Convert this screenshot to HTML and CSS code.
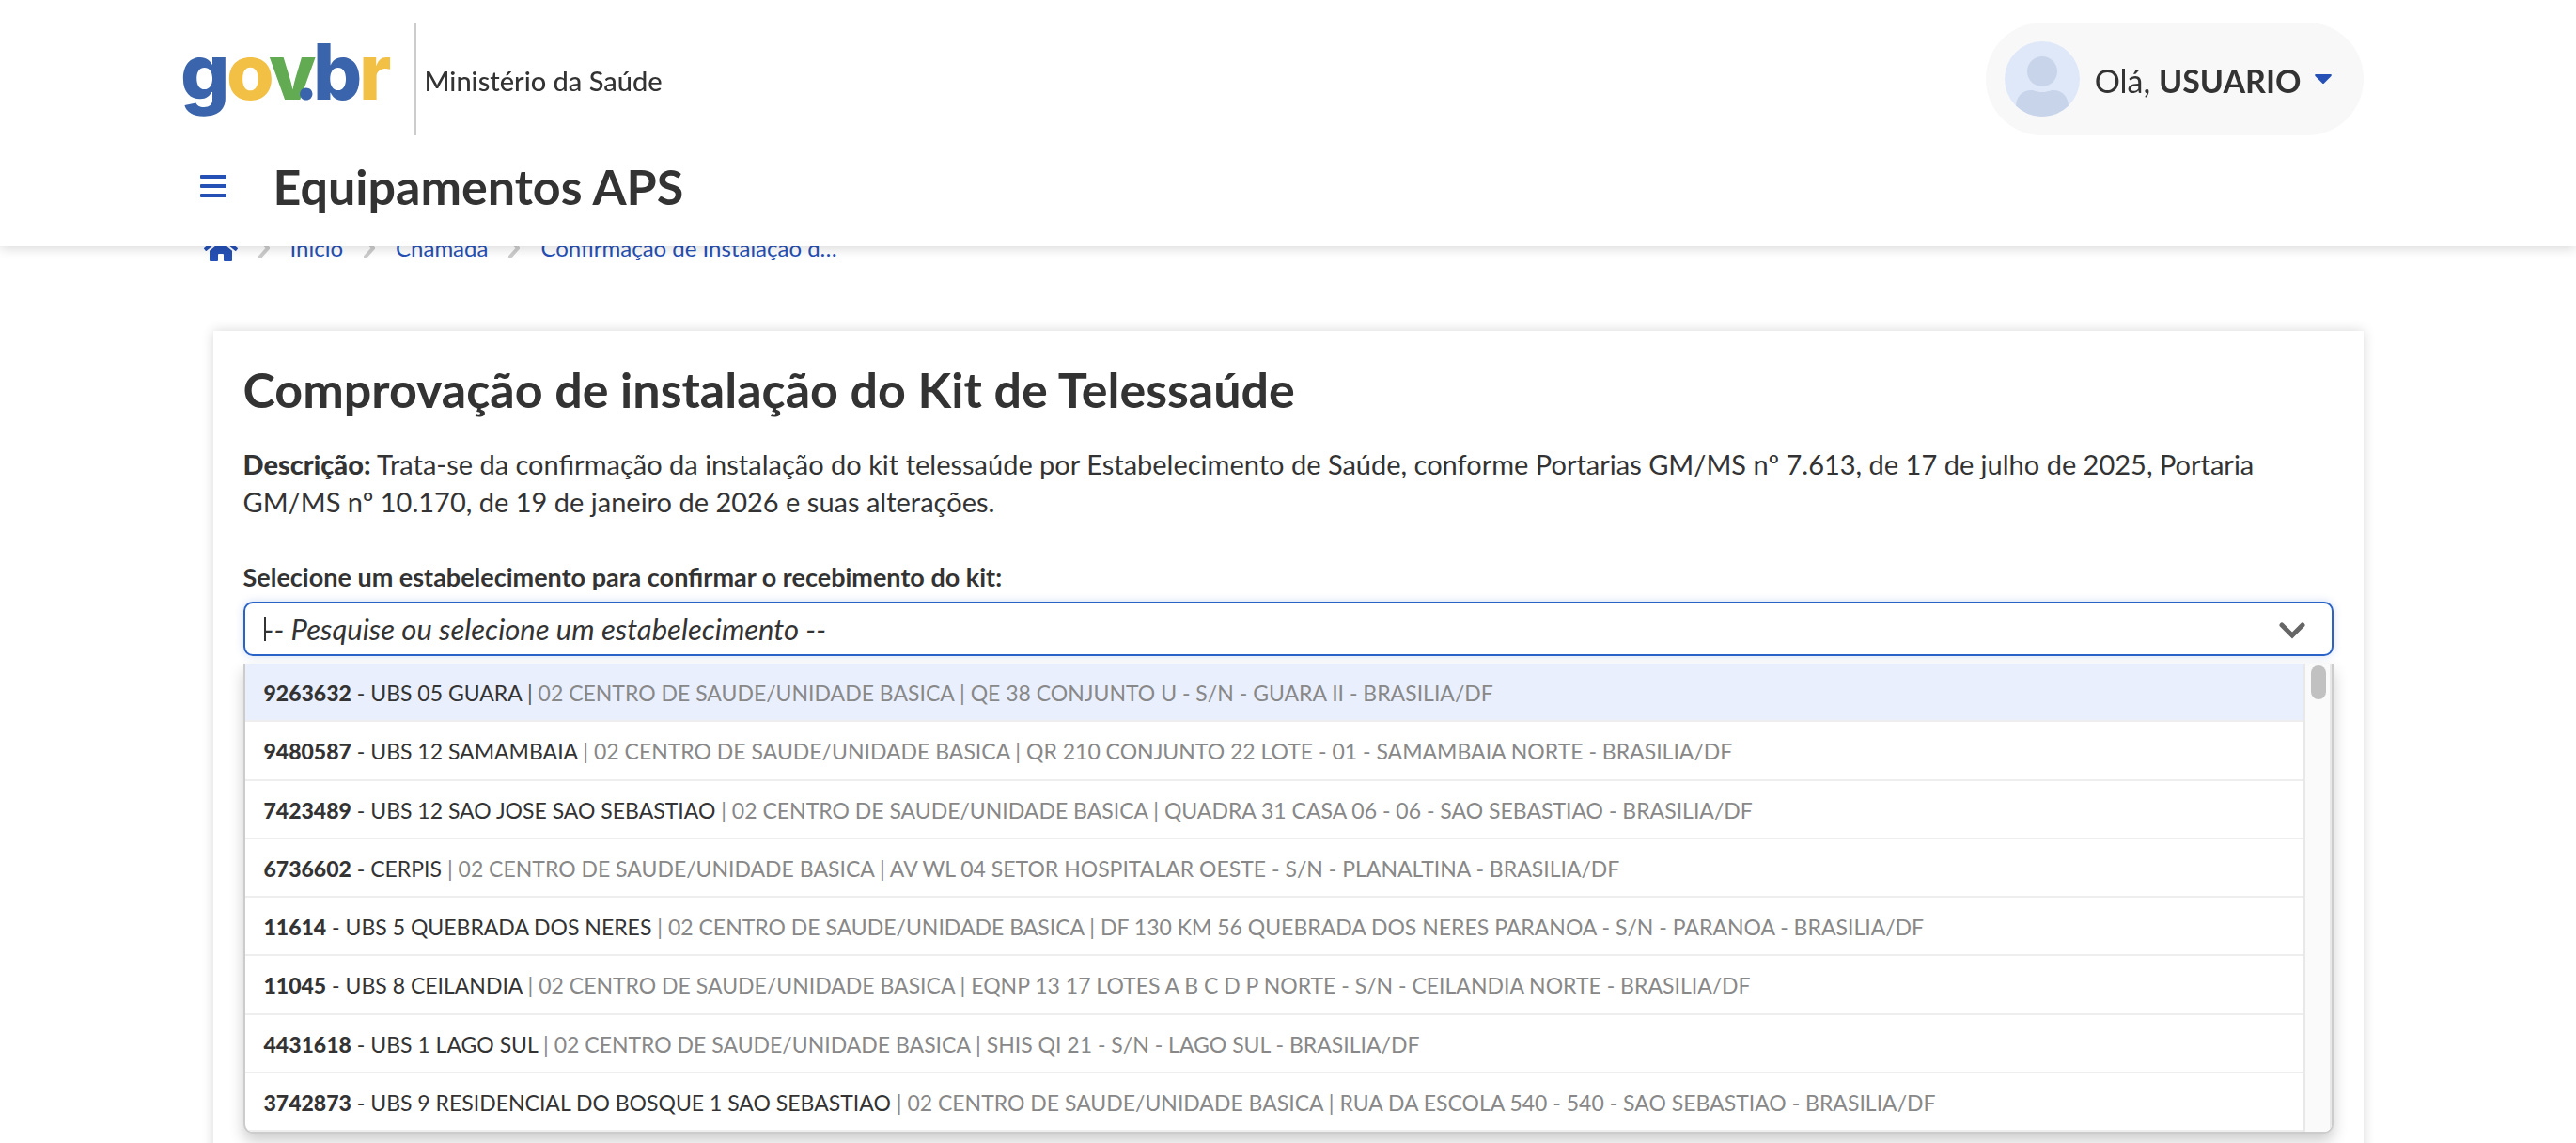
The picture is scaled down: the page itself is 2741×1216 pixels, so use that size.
FILE: index.html
```html
<!DOCTYPE html>
<html lang="pt-BR">
<head>
    <meta charset="UTF-8">
    <meta name="viewport" content="width=device-width, initial-scale=1.0">
    <title>Equipamentos APS</title>
    <link rel="stylesheet" href="styles.css">
</head>
<body>
    <!-- Header -->
    <header class="header">
        <div class="container">
            <div class="header-top">
                <a href="#" class="logo" aria-label="gov.br">
                    <svg viewBox="0 0 222 80" width="222" height="80">
                        <g class="logo-text">
                            <text class="blue" x="-3" y="62">g</text>
                            <text class="yellow" x="46" y="62">o</text>
                            <text class="green" x="91" y="62">v</text>
                            <text class="blue dot" x="121" y="62">.</text>
                            <text class="blue" x="138" y="62">b</text>
                            <text class="yellow" x="187" y="62">r</text>
                        </g>
                    </svg>
                </a>
                <span class="divider"></span>
                <span class="ministry">Ministério da Saúde</span>
                <button type="button" class="user-btn">
                    <svg class="avatar" viewBox="0 0 80 80" width="80" height="80">
                        <defs>
                            <clipPath id="avatarClip"><circle cx="40" cy="40" r="40"/></clipPath>
                        </defs>
                        <g clip-path="url(#avatarClip)">
                            <rect width="80" height="80" fill="#dfe8f8"/>
                            <circle cx="40" cy="32" r="16" fill="#c8d4ea"/>
                            <path d="M12 80V69C12 59 19 52 28 52C32 52 34 54 40 54S48 52 52 52C61 52 68 59 68 69V80Z" fill="#c8d4ea"/>
                        </g>
                    </svg>
                    <span>Olá, <strong>USUARIO</strong></span>
                    <svg class="caret-down" viewBox="0 0 18 10" width="18" height="10">
                        <path d="M1 0H17C18 0 18 1 17.500 2L10 9.500Q9 10.500 8 9.500L0.500 2C0 1 0 0 1 0Z" fill="#2550b5"/>
                    </svg>
                </button>
            </div>
            <div class="header-bottom">
                <button type="button" class="menu-btn" aria-label="Menu">
                    <svg viewBox="0 0 28 26" width="28" height="26">
                        <g fill="#2550b5">
                            <rect y="1" width="28" height="4" rx="1"/>
                            <rect y="11" width="28" height="4" rx="1"/>
                            <rect y="21" width="28" height="4" rx="1"/>
                        </g>
                    </svg>
                </button>
                <div class="system-title">Equipamentos APS</div>
            </div>
        </div>
    </header>

    <main class="container">
        <!-- Breadcrumb, partly under the sticky header -->
        <nav class="breadcrumb">
            <a href="#" class="home" aria-label="Página inicial">
                <svg viewBox="0 0 576 512" width="36" height="32">
                    <path fill="#2550b5" d="M280.370 148.260L96 300.110V464a16 16 0 0 0 16 16l112.060-.29a16 16 0 0 0 15.920-16V368a16 16 0 0 1 16-16h64a16 16 0 0 1 16 16v95.640a16 16 0 0 0 16 16.050L464 480a16 16 0 0 0 16-16V300L295.670 148.260a12.190 12.190 0 0 0-15.300 0zM571.600 251.470L488 182.560V44.050a12 12 0 0 0-12-12h-56a12 12 0 0 0-12 12v72.610L318.470 43a48 48 0 0 0-61 0L4.340 251.470a12 12 0 0 0-1.600 16.900l25.500 31A12 12 0 0 0 45.150 301l235.220-193.740a12.190 12.190 0 0 1 15.300 0L530.900 301a12 12 0 0 0 16.900-1.600l25.500-31a12 12 0 0 0-1.700-16.930z"/>
                </svg>
            </a>
            <svg class="sep" viewBox="0 0 12 22" width="12" height="22"><path d="M2 2L10 11L2 20"/></svg>
            <a href="#">Início</a>
            <svg class="sep" viewBox="0 0 12 22" width="12" height="22"><path d="M2 2L10 11L2 20"/></svg>
            <a href="#">Chamada</a>
            <svg class="sep" viewBox="0 0 12 22" width="12" height="22"><path d="M2 2L10 11L2 20"/></svg>
            <a href="#">Confirmação de Instalação d…</a>
        </nav>

        <!-- Card -->
        <section class="card">
            <h1>Comprovação de instalação do Kit de Telessaúde</h1>
            <p class="description"><strong>Descrição:</strong> Trata-se da confirmação da instalação do kit telessaúde por Estabelecimento de Saúde, conforme Portarias GM/MS nº 7.613, de 17 de julho de 2025, Portaria GM/MS nº 10.170, de 19 de janeiro de 2026 e suas alterações.</p>

            <label for="estabelecimento">Selecione um estabelecimento para confirmar o recebimento do kit:</label>
            <div class="select-box">
                <input type="text" id="estabelecimento" role="combobox" aria-expanded="true" aria-controls="lista" autocomplete="off" placeholder="-- Pesquise ou selecione um estabelecimento --">
                <span class="text-cursor"></span>
                <svg class="chevron" viewBox="0 0 28 18" width="28" height="18"><path d="M3 3L14 14L25 3"/></svg>
            </div>

            <div class="dropdown">
                <ul class="options" id="lista" role="listbox">
                    <li role="option" class="active"><strong>9263632</strong> - UBS 05 GUARA <span class="bar">|</span> <span>02 CENTRO DE SAUDE/UNIDADE BASICA | QE 38 CONJUNTO U - S/N - GUARA II - BRASILIA/DF</span></li>
                    <li role="option"><strong>9480587</strong> - UBS 12 SAMAMBAIA <span>| 02 CENTRO DE SAUDE/UNIDADE BASICA | QR 210 CONJUNTO 22 LOTE - 01 - SAMAMBAIA NORTE - BRASILIA/DF</span></li>
                    <li role="option"><strong>7423489</strong> - UBS 12 SAO JOSE SAO SEBASTIAO <span>| 02 CENTRO DE SAUDE/UNIDADE BASICA | QUADRA 31 CASA 06 - 06 - SAO SEBASTIAO - BRASILIA/DF</span></li>
                    <li role="option"><strong>6736602</strong> - CERPIS <span>| 02 CENTRO DE SAUDE/UNIDADE BASICA | AV WL 04 SETOR HOSPITALAR OESTE - S/N - PLANALTINA - BRASILIA/DF</span></li>
                    <li role="option"><strong>11614</strong> - UBS 5 QUEBRADA DOS NERES <span>| 02 CENTRO DE SAUDE/UNIDADE BASICA | DF 130 KM 56 QUEBRADA DOS NERES PARANOA - S/N - PARANOA - BRASILIA/DF</span></li>
                    <li role="option"><strong>11045</strong> - UBS 8 CEILANDIA <span>| 02 CENTRO DE SAUDE/UNIDADE BASICA | EQNP 13 17 LOTES A B C D P NORTE - S/N - CEILANDIA NORTE - BRASILIA/DF</span></li>
                    <li role="option"><strong>4431618</strong> - UBS 1 LAGO SUL <span>| 02 CENTRO DE SAUDE/UNIDADE BASICA | SHIS QI 21 - S/N - LAGO SUL - BRASILIA/DF</span></li>
                    <li role="option"><strong>3742873</strong> - UBS 9 RESIDENCIAL DO BOSQUE 1 SAO SEBASTIAO <span>| 02 CENTRO DE SAUDE/UNIDADE BASICA | RUA DA ESCOLA 540 - 540 - SAO SEBASTIAO - BRASILIA/DF</span></li>
                </ul>
                <div class="scroll-track"><div class="scroll-thumb"></div></div>
            </div>
        </section>
    </main>
</body>
</html>
```
FILE: styles.css
```css
* {
    box-sizing: border-box;
}

body {
    margin: 0;
    background: #fff;
    color: #333;
    font-family: Lato, "Open Sans", sans-serif;
    font-size: 29px;
    line-height: 40px;
    height: 100vh;
    overflow: hidden;
}

a {
    color: #2550b5;
    text-decoration: none;
}

button {
    border: none;
    background: none;
    padding: 0;
    font: inherit;
    color: inherit;
    cursor: pointer;
}

.container {
    max-width: 2288px;
    margin: 0 auto;
}

/* Header */
.header {
    position: sticky;
    top: 0;
    z-index: 10;
    padding: 24px 0 34px;
    background: #fff;
    box-shadow: 0 2px 12px rgba(0, 0, 0, 0.16);
}

.header-top {
    display: flex;
    align-items: center;
    margin-left: -32px;
}

.logo svg {
    display: block;
    overflow: visible;
}

.logo-text {
    font-family: Inter, sans-serif;
    font-size: 82px;
    font-weight: 800;
}

.logo-text .dot {
    font-family: Lato, sans-serif;
    font-weight: 900;
}

.blue {
    fill: #3a64ab;
}

.yellow {
    fill: #f3c046;
}

.green {
    fill: #62ab52;
}

.divider {
    width: 2px;
    height: 120px;
    margin: 0 9px 0 24px;
    background: #ccc;
}

.ministry {
    padding-top: 4px;
    font-weight: 500;
}

.user-btn {
    display: flex;
    align-items: center;
    margin-left: auto;
    padding: 20px 34px 20px 20px;
    border-radius: 60px;
    background: #f8f8f8;
    font-size: 34px;
}

.user-btn span {
    padding-top: 4px;
}

.avatar {
    margin-right: 16px;
}

.caret-down {
    margin-left: 14px;
}

.header-bottom {
    display: flex;
    align-items: center;
    gap: 50px;
    margin-left: -14px;
    padding-top: 24px;
}

.menu-btn {
    display: flex;
    align-items: center;
    justify-content: center;
    width: 28px;
    height: 60px;
}

.system-title {
    font-size: 52px;
    line-height: 60px;
    font-weight: 700;
}

/* Breadcrumb */
.breadcrumb {
    display: flex;
    align-items: center;
    gap: 22px;
    height: 40px;
    margin-top: -18px;
    margin-left: -10px;
    font-size: 24px;
}

.home svg {
    display: block;
}

.sep {
    fill: none;
    stroke: #ccc;
    stroke-width: 4;
    stroke-linecap: round;
}

/* Card */
.card {
    margin-top: 68px;
    padding: 30px 32px 60px;
    background: #fff;
    box-shadow: 0 0 12px rgba(0, 0, 0, 0.16);
}

h1 {
    margin: 0;
    font-size: 52px;
    line-height: 64px;
    font-weight: 700;
}

.description {
    margin: 28px 0 44px;
}

.description strong {
    font-weight: 900;
}

label {
    display: block;
    margin-bottom: 10px;
    font-size: 27px;
    line-height: 32px;
    font-weight: 700;
}

.select-box {
    position: relative;
}

.select-box input {
    display: block;
    width: 100%;
    height: 58px;
    padding: 0 80px 0 20px;
    border: 2px solid #2a63c8;
    border-radius: 10px;
    outline: none;
    background: #fff;
    box-shadow: 0 0 10px rgba(42, 99, 200, 0.22);
    color: #333;
    font: italic 31px Lato, "Open Sans", sans-serif;
}

.select-box input::placeholder {
    color: #333;
    opacity: 1;
}

.text-cursor {
    position: absolute;
    top: 16px;
    left: 22px;
    width: 2px;
    height: 26px;
    background: #333;
}

.chevron {
    position: absolute;
    top: 22px;
    right: 30px;
    fill: none;
    stroke: #666;
    stroke-width: 5;
    stroke-linecap: round;
}

/* Options list */
.dropdown {
    display: flex;
    margin-top: 8px;
    border: 2px solid #ccc;
    border-top: none;
    border-radius: 0 0 10px 10px;
    background: #fff;
    box-shadow: 0 8px 16px rgba(0, 0, 0, 0.2);
    overflow: hidden;
}

.options {
    display: grid;
    flex: 1;
    height: 498px;
    margin: 0;
    padding: 0;
    list-style: none;
    font-size: 23px;
}

.options li {
    padding: 11px 20px 9px;
    border-bottom: 2px solid #eee;
}

.options li.active {
    background: #e9effd;
}

.options strong {
    font-weight: 900;
}

.options span {
    color: #888;
}

.options .bar {
    color: #555;
}

.scroll-track {
    width: 30px;
    padding: 2px 4px 0 6px;
    border-left: 2px solid #e8e8e8;
    border-right: 2px solid #e8e8e8;
    background: #fafafa;
}

.scroll-thumb {
    width: 16px;
    height: 36px;
    border-radius: 8px;
    background: #c1c1c1;
}
```
